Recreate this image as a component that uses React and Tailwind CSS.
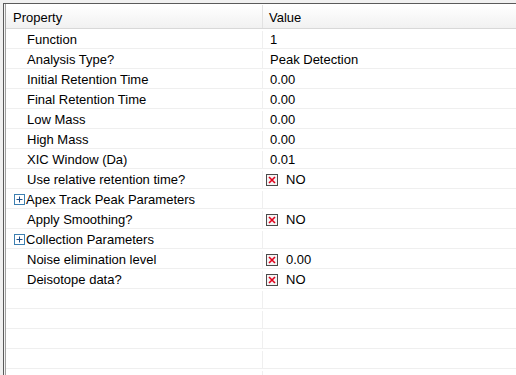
import React from 'react';

const rows = [
  { name: 'Function', value: '1' },
  { name: 'Analysis Type?', value: 'Peak Detection' },
  { name: 'Initial Retention Time', value: '0.00' },
  { name: 'Final Retention Time', value: '0.00' },
  { name: 'Low Mass', value: '0.00' },
  { name: 'High Mass', value: '0.00' },
  { name: 'XIC Window (Da)', value: '0.01' },
  { name: 'Use relative retention time?', value: 'NO', check: true },
  { name: 'Apex Track Peak Parameters', group: true },
  { name: 'Apply Smoothing?', value: 'NO', check: true },
  { name: 'Collection Parameters', group: true },
  { name: 'Noise elimination level', value: '0.00', check: true },
  { name: 'Deisotope data?', value: 'NO', check: true },
  {}, {}, {}, {}, {},
];

const PlusBox = () => (
  <svg width="11" height="11" viewBox="0 0 11 11" className="shrink-0">
    <rect x="0.5" y="0.5" width="10" height="10" fill="#ffffff" stroke="#3c7fb1" />
    <path d="M2.5 5.5h6M5.5 2.5v6" stroke="#1e4f8a" strokeWidth="1" />
  </svg>
);

const CrossBox = () => (
  <svg width="12" height="12" viewBox="0 0 12 12" className="shrink-0">
    <rect x="0.5" y="0.5" width="11" height="11" fill="#f4f4f4" stroke="#4a4a4a" />
    <path d="M3 3l6 6M9 3l-6 6" stroke="#e0001a" strokeWidth="1.6" />
  </svg>
);

export default function App() {
  return (
    <div className="w-[516px] h-[375px] overflow-hidden bg-[#f0f0f0] flex flex-col text-[13px] text-black" style={{ fontFamily: '"Liberation Sans", Arial, sans-serif' }}>
      <div className="h-[3px] shrink-0" />
      <div className="flex-1 flex ml-[3px] border-l border-t border-[#5a5a5a] bg-white">
        <div className="w-[2px] shrink-0 bg-[#f4f4f4] border-r border-[#a0a0a0]" />
        <div className="flex-1 flex flex-col">
          <div className="h-[24px] shrink-0 flex items-center bg-gradient-to-b from-white to-[#f1f1f1] border-b border-[#d8d8d8] mt-[1px]">
            <div className="w-[257px] pl-[7px] pt-[2px] border-r border-[#e2e2e2] h-full flex items-center">Property</div>
            <div className="flex-1 pl-[6px] pt-[2px]">Value</div>
          </div>
          {rows.map((r, i) => (
            <div key={i} className="h-[20px] shrink-0 flex items-center border-b border-[#efefef] pt-[2px]">
              <div className="w-[257px] h-full flex items-center border-r border-[#efefef]">
                {r.group ? (
                  <div className="flex items-center gap-[1px] pl-[8px]">
                    <PlusBox />
                    <span>{r.name}</span>
                  </div>
                ) : (
                  <span className="pl-[21px]">{r.name}</span>
                )}
              </div>
              <div className="flex-1 flex items-center pl-[7px]">
                {r.check ? (
                  <div className="flex items-center gap-[8px] ml-[-4px]">
                    <CrossBox />
                    <span>{r.value}</span>
                  </div>
                ) : (
                  <span>{r.value}</span>
                )}
              </div>
            </div>
          ))}
        </div>
      </div>
    </div>
  );
}
